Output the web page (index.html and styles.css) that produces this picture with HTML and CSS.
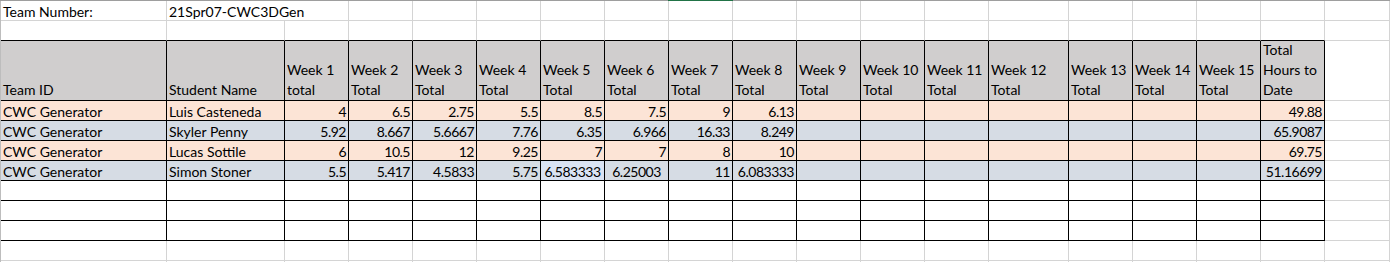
FILE: index.html
```html
<!DOCTYPE html>
<html>
<head>
<meta charset="utf-8">
<link rel="stylesheet" href="styles.css">
</head>
<body>
<div class="topline"></div>
<div class="sheet">
  <!-- row 1 -->
  <div>Team Number:</div><div class="span2">21Spr07-CWC3DGen</div>
  <div></div><div></div><div></div><div></div><div></div><div></div><div></div><div></div>
  <div></div><div></div><div></div><div></div><div></div><div></div><div></div><div></div>
  <!-- row 2 -->
  <div class="b"></div><div class="b"></div><div class="b"></div><div class="b"></div><div class="b"></div><div class="b"></div><div class="b"></div><div class="b"></div><div class="b"></div><div class="b"></div><div class="b"></div><div class="b"></div><div class="b"></div><div class="b"></div><div class="b"></div><div class="b"></div><div class="b"></div><div class="b"></div><div></div>
  <!-- header -->
  <div class="t h"><span>Team ID</span></div>
  <div class="t h"><span>Student Name</span></div>
  <div class="t h"><span>Week 1<br>total</span></div>
  <div class="t h"><span>Week 2<br>Total</span></div>
  <div class="t h"><span>Week 3<br>Total</span></div>
  <div class="t h"><span>Week 4<br>Total</span></div>
  <div class="t h"><span>Week 5<br>Total</span></div>
  <div class="t h"><span>Week 6<br>Total</span></div>
  <div class="t h"><span>Week 7<br>Total</span></div>
  <div class="t h"><span>Week 8<br>Total</span></div>
  <div class="t h"><span>Week 9<br>Total</span></div>
  <div class="t h"><span>Week 10<br>Total</span></div>
  <div class="t h"><span>Week 11<br>Total</span></div>
  <div class="t h"><span>Week 12<br>Total</span></div>
  <div class="t h"><span>Week 13<br>Total</span></div>
  <div class="t h"><span>Week 14<br>Total</span></div>
  <div class="t h"><span>Week 15<br>Total</span></div>
  <div class="t h"><span>Total<br>Hours to<br>Date</span></div>
  <div></div>
  <!-- Luis -->
  <div class="t pe">CWC Generator</div><div class="t pe">Luis Casteneda</div>
  <div class="t pe n">4</div><div class="t pe n">6.5</div><div class="t pe n">2.75</div><div class="t pe n">5.5</div><div class="t pe n">8.5</div><div class="t pe n">7.5</div><div class="t pe n">9</div><div class="t pe n">6.13</div>
  <div class="t pe"></div><div class="t pe"></div><div class="t pe"></div><div class="t pe"></div><div class="t pe"></div><div class="t pe"></div><div class="t pe"></div>
  <div class="t pe n">49.88</div><div></div>
  <!-- Skyler -->
  <div class="t bl">CWC Generator</div><div class="t bl">Skyler Penny</div>
  <div class="t bl n">5.92</div><div class="t bl n">8.667</div><div class="t bl n">5.6667</div><div class="t bl n">7.76</div><div class="t bl n">6.35</div><div class="t bl n">6.966</div><div class="t bl n">16.33</div><div class="t bl n">8.249</div>
  <div class="t bl"></div><div class="t bl"></div><div class="t bl"></div><div class="t bl"></div><div class="t bl"></div><div class="t bl"></div><div class="t bl"></div>
  <div class="t bl n">65.9087</div><div></div>
  <!-- Lucas -->
  <div class="t pe">CWC Generator</div><div class="t pe">Lucas Sottile</div>
  <div class="t pe n">6</div><div class="t pe n">10.5</div><div class="t pe n">12</div><div class="t pe n">9.25</div><div class="t pe n">7</div><div class="t pe n">7</div><div class="t pe n">8</div><div class="t pe n">10</div>
  <div class="t pe"></div><div class="t pe"></div><div class="t pe"></div><div class="t pe"></div><div class="t pe"></div><div class="t pe"></div><div class="t pe"></div>
  <div class="t pe n">69.75</div><div></div>
  <!-- Simon -->
  <div class="t bl">CWC Generator</div><div class="t bl">Simon Stoner</div>
  <div class="t bl n">5.5</div><div class="t bl n">5.417</div><div class="t bl n">4.5833</div><div class="t bl n">5.75</div><div class="t hl c">6.583333</div><div class="t bl c">6.25003</div><div class="t bl n">11</div><div class="t bl n">6.083333</div>
  <div class="t bl"></div><div class="t bl"></div><div class="t bl"></div><div class="t bl"></div><div class="t bl"></div><div class="t bl"></div><div class="t bl"></div>
  <div class="t bl n">51.16699</div><div></div>
  <!-- empty bordered rows -->
  <div class="t"></div><div class="t"></div><div class="t"></div><div class="t"></div><div class="t"></div><div class="t"></div><div class="t"></div><div class="t"></div><div class="t"></div><div class="t"></div><div class="t"></div><div class="t"></div><div class="t"></div><div class="t"></div><div class="t"></div><div class="t"></div><div class="t"></div><div class="t"></div><div></div>
  <div class="t"></div><div class="t"></div><div class="t"></div><div class="t"></div><div class="t"></div><div class="t"></div><div class="t"></div><div class="t"></div><div class="t"></div><div class="t"></div><div class="t"></div><div class="t"></div><div class="t"></div><div class="t"></div><div class="t"></div><div class="t"></div><div class="t"></div><div class="t"></div><div></div>
  <div class="t"></div><div class="t"></div><div class="t"></div><div class="t"></div><div class="t"></div><div class="t"></div><div class="t"></div><div class="t"></div><div class="t"></div><div class="t"></div><div class="t"></div><div class="t"></div><div class="t"></div><div class="t"></div><div class="t"></div><div class="t"></div><div class="t"></div><div class="t"></div><div></div>
  <!-- plain grid row -->
  <div></div><div></div><div></div><div></div><div></div><div></div><div></div><div></div><div></div><div></div><div></div><div></div><div></div><div></div><div></div><div></div><div></div><div></div><div></div>
  <!-- partial row -->
  <div class="last"></div><div class="last"></div><div class="last"></div><div class="last"></div><div class="last"></div><div class="last"></div><div class="last"></div><div class="last"></div><div class="last"></div><div class="last"></div><div class="last"></div><div class="last"></div><div class="last"></div><div class="last"></div><div class="last"></div><div class="last"></div><div class="last"></div><div class="last"></div><div class="last"></div>
</div>
</body>
</html>
```

FILE: styles.css
```css
html, body {
  margin: 0;
  padding: 0;
  background: #ffffff;
  overflow: hidden;
}
body {
  font-family: Lato, "Liberation Sans", sans-serif;
  font-size: 14px;
  color: #000000;
}
.topline {
  height: 1px;
  width: 1390px;
  background: linear-gradient(to right, #9e9e9e 0, #9e9e9e 668px, #217346 668px, #217346 733px, #9e9e9e 733px);
}
.sheet {
  display: grid;
  grid-template-columns: 166px 118px repeat(11, 64px) 80px repeat(4, 64px) 65px;
  grid-template-rows: 20px 20px 60px repeat(8, 20px) 2px;
  width: 1389px;
  border-left: 1px solid #bdbdbd;
}
.sheet > div {
  box-sizing: border-box;
  border-right: 1px solid #d4d4d4;
  border-bottom: 1px solid #d4d4d4;
  padding: 0 2px;
  display: flex;
  align-items: flex-end;
  line-height: 16px;
  white-space: nowrap;
  overflow: hidden;
}
.sheet > .span2 {
  grid-column: span 2;
}
.sheet > .b {
  border-bottom-color: #000000;
}
.sheet > .t {
  border-right-color: #000000;
  border-bottom-color: #000000;
}
.sheet > .h {
  background: #d0cece;
  line-height: 20px;
}
.sheet > .pe {
  background: #fce4d6;
}
.sheet > .bl {
  background: #d6dce4;
}
.sheet > .hl {
  background: #dae3f3;
}
.sheet > .n {
  justify-content: flex-end;
  letter-spacing: -0.5px;
}
.sheet > .c {
  justify-content: center;
  letter-spacing: -0.5px;
}
.sheet > .last {
  border-bottom: none;
}
```
